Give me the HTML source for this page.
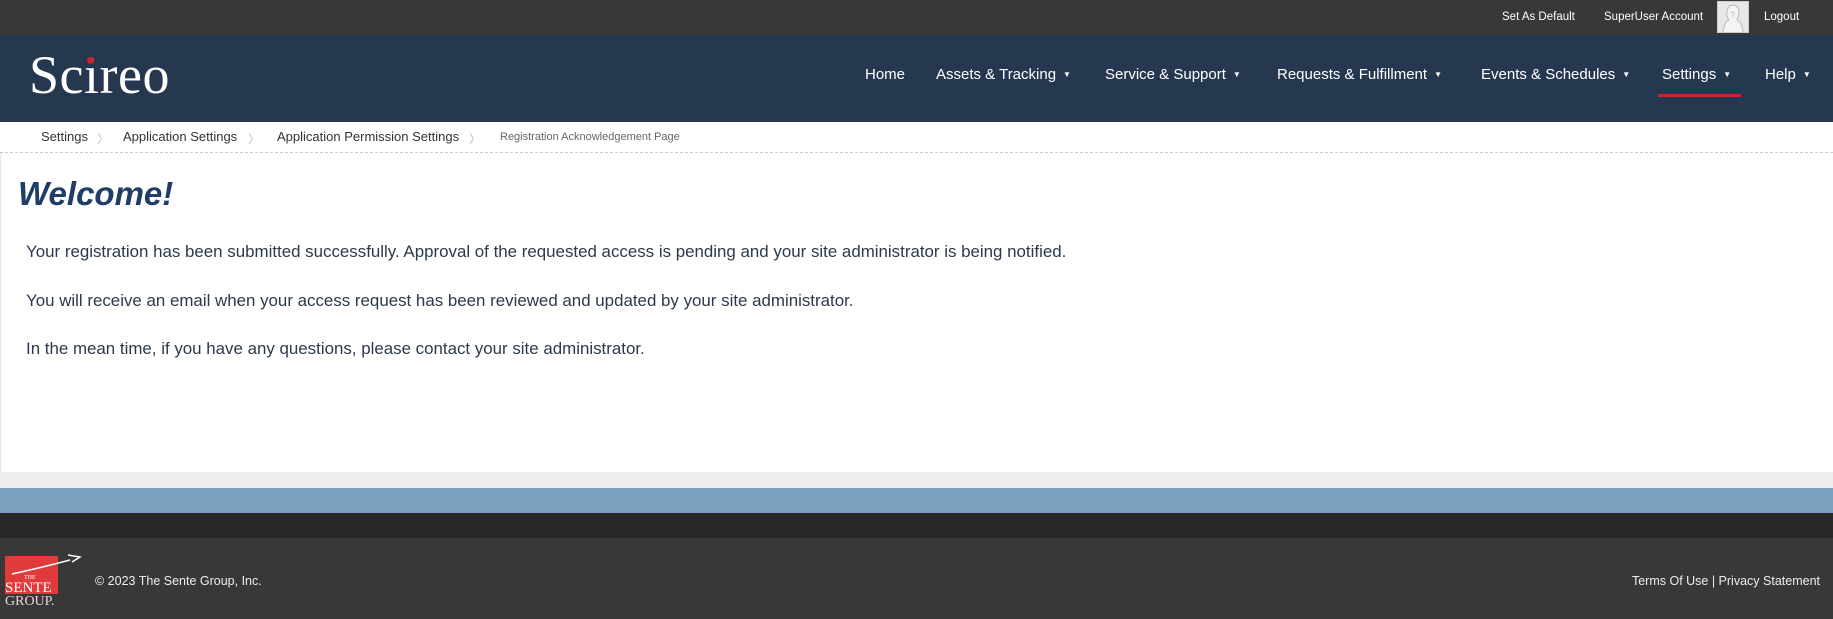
<!DOCTYPE html>
<html><head><meta charset="utf-8"><style>
*{margin:0;padding:0;box-sizing:border-box}
body{width:1833px;height:619px;overflow:hidden;font-family:"Liberation Sans",sans-serif;background:#fff;position:relative}
.a{position:absolute;white-space:nowrap}
#top{position:absolute;left:0;top:0;width:1833px;height:35px;background:#383838}
#top .a{color:#fff;font-size:11.5px;top:11px}
#nav{position:absolute;left:0;top:35px;width:1833px;height:87px;background:#263850}
#nav .n{color:#fff;font-size:15px;top:31px}
.car{font-size:8px;margin-left:7px;vertical-align:2px}
.bc{font-size:13px;color:#333;top:129px}
.sep{color:#bbb;font-size:12px;top:130px}
p.t{position:absolute;left:26px;font-size:16.9px;color:#2b3a4a;white-space:nowrap}
</style></head><body>
<div id="top">
<span class="a" style="left:1502px">Set As Default</span>
<span class="a" style="left:1604px">SuperUser Account</span>
<div class="a" style="left:1717px;top:1px;width:32px;height:32px;background:#e8e8e8;border:1px solid #ccc">
<svg width="30" height="30" viewBox="0 0 30 30"><path d="M5 30 Q6 20 11 18 Q8 14 9 9 Q10 3 15 3 Q20 3 21 9 Q21 14 19 18 Q24 20 25 30" fill="#f4f4f4" stroke="#bbb"/><text x="12" y="16" font-size="9" fill="#bbb" font-family="Liberation Sans">?</text></svg></div>
<span class="a" style="left:1764px">Logout</span>
</div>
<div id="nav">
<span class="a" style="left:29px;top:9px;font-family:'Liberation Serif',serif;font-size:54px;color:#fff;letter-spacing:0.5px">Scireo</span>
<div class="a" style="left:87px;top:22px;width:7px;height:7px;border-radius:50%;background:#d0202a"></div>
<span class="a n" style="left:865px">Home</span>
<span class="a n" style="left:936px">Assets &amp; Tracking<span class="car">▼</span></span>
<span class="a n" style="left:1105px">Service &amp; Support<span class="car">▼</span></span>
<span class="a n" style="left:1277px">Requests &amp; Fulfillment<span class="car">▼</span></span>
<span class="a n" style="left:1481px">Events &amp; Schedules<span class="car">▼</span></span>
<span class="a n" style="left:1662px">Settings<span class="car">▼</span></span>
<span class="a n" style="left:1765px">Help<span class="car">▼</span></span>
<div class="a" style="left:1658px;top:59px;width:83px;height:3px;background:#c9252c"></div>
</div>
<span class="a bc" style="left:41px">Settings</span><span class="a sep" style="left:97px">〉</span>
<span class="a bc" style="left:123px">Application Settings</span><span class="a sep" style="left:248px">〉</span>
<span class="a bc" style="left:277px">Application Permission Settings</span><span class="a sep" style="left:469px">〉</span>
<span class="a" style="left:500px;top:131px;font-size:11px;color:#666">Registration Acknowledgement Page</span>
<div class="a" style="left:0;top:152px;width:1833px;border-top:1px dashed #ccc"></div>
<div class="a" style="left:0;top:153px;width:1px;height:319px;background:#e6e6e6"></div>
<span class="a" style="left:18px;top:175px;font-size:33px;font-weight:bold;font-style:italic;color:#1f3d66">Welcome!</span>
<p class="t" style="top:242px">Your registration has been submitted successfully. Approval of the requested access is pending and your site administrator is being notified.</p>
<p class="t" style="top:291px">You will receive an email when your access request has been reviewed and updated by your site administrator.</p>
<p class="t" style="top:339px">In the mean time, if you have any questions, please contact your site administrator.</p>
<div class="a" style="left:0;top:472px;width:1833px;height:16px;background:#efefef"></div>
<div class="a" style="left:0;top:488px;width:1833px;height:25px;background:#7a9fbf"></div>
<div class="a" style="left:0;top:513px;width:1833px;height:25px;background:#282828"></div>
<div class="a" style="left:0;top:538px;width:1833px;height:81px;background:#383838"></div>
<div class="a" style="left:5px;top:556px;width:53px;height:38px;background:#e03a3a"></div>
<svg class="a" style="left:10px;top:552px" width="72" height="30"><path d="M2 22 Q30 16 60 8 M58 3 L70 5 L62 10" stroke="#fff" stroke-width="1.5" fill="none"/></svg>
<span class="a" style="left:24px;top:575px;font-size:6px;color:#fff;font-family:'Liberation Serif',serif">THE</span>
<span class="a" style="left:5px;top:580px;font-size:15px;color:#fff;font-family:'Liberation Serif',serif">SENTE</span>
<span class="a" style="left:5px;top:594px;font-size:14px;color:#ddd;font-family:'Liberation Serif',serif">GROUP.</span>
<span class="a" style="left:95px;top:574px;font-size:12.5px;color:#eee">© 2023 The Sente Group, Inc.</span>
<span class="a" style="right:13px;top:574px;font-size:12.5px;color:#eee">Terms Of Use | Privacy Statement</span>
</body></html>
